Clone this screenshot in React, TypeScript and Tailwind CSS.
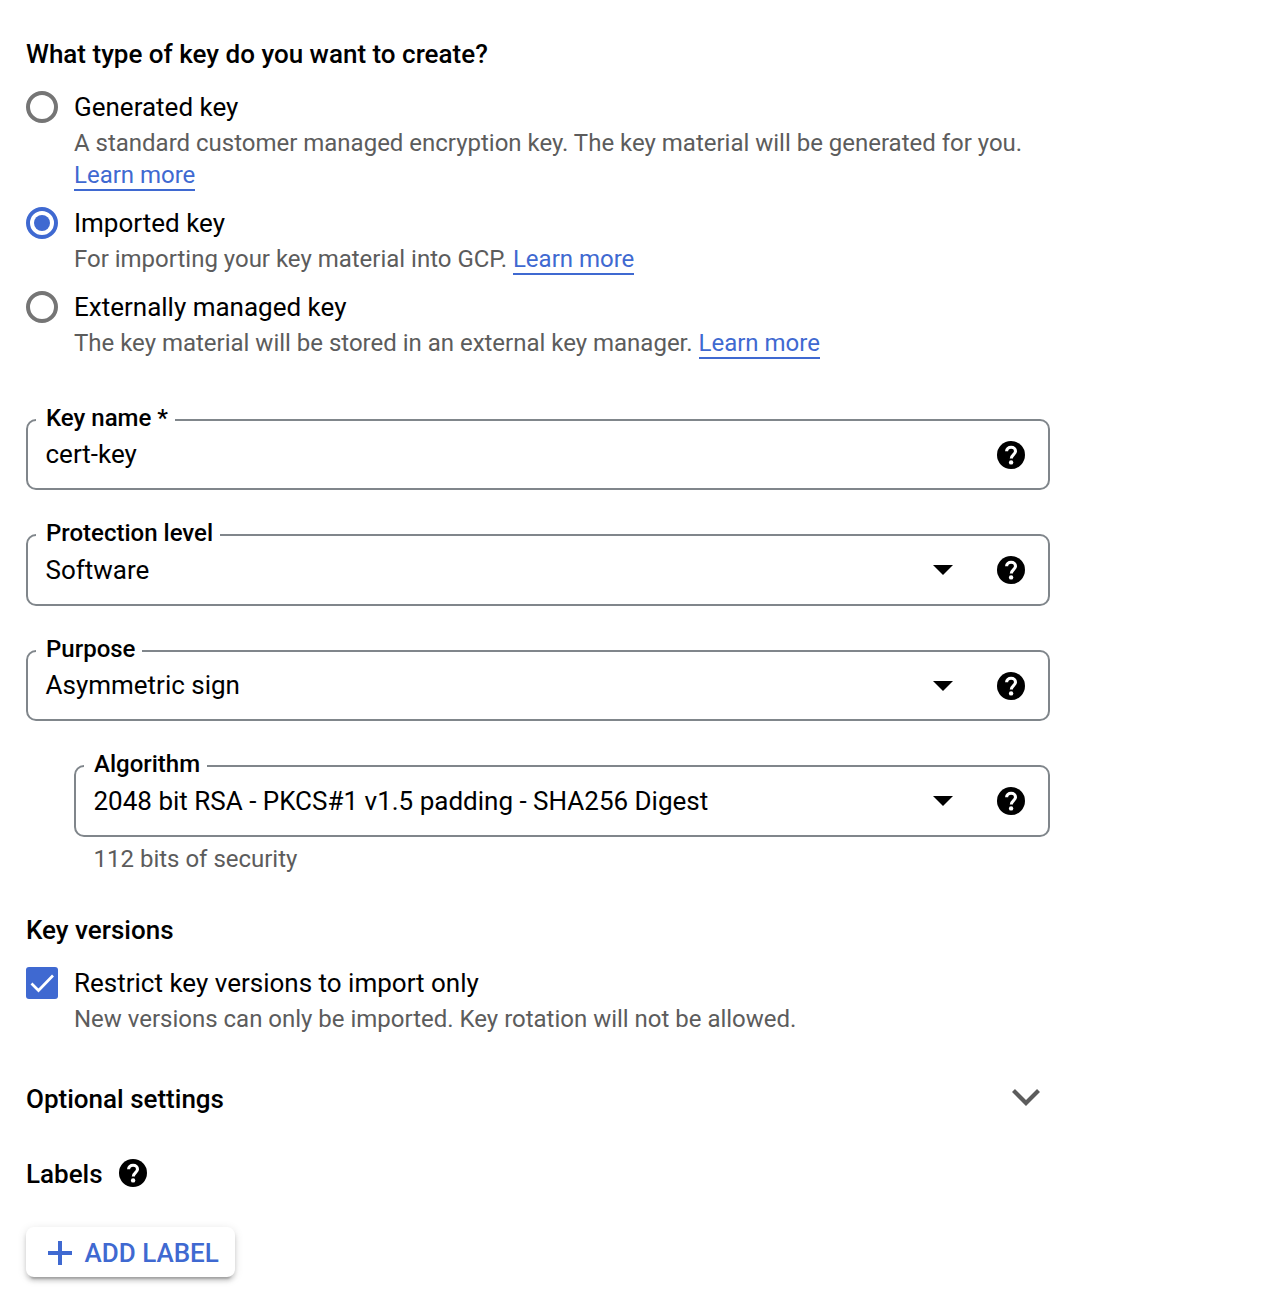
import type { ReactNode } from "react";

function HelpIcon() {
  return (
    <svg viewBox="0 0 28 28" className="block size-7 shrink-0" aria-hidden="true">
      <circle cx="14" cy="14" r="14" fill="#000" />
      <path
        d="M9.6 10.3C9.6 7.8 11.6 6.2 14.1 6.2s4.4 1.6 4.4 4c0 3.2-4.2 3.6-4.2 7.3"
        fill="none"
        stroke="#fff"
        strokeWidth="3.1"
      />
      <circle cx="14.1" cy="21.4" r="2.2" fill="#fff" />
    </svg>
  );
}

function LearnMore() {
  return (
    <a href="#" className="border-b-2 border-[#3f69d1] text-[#3f69d1]">
      Learn more
    </a>
  );
}

function Heading({ children }: { children: ReactNode }) {
  return <h2 className="text-[26px] leading-8 font-medium">{children}</h2>;
}

function Radio({ checked = false }: { checked?: boolean }) {
  return checked ? (
    <span className="flex size-8 shrink-0 items-center justify-center rounded-full border-4 border-[#3f69d1]">
      <span className="size-4 rounded-full bg-[#3f69d1]" />
    </span>
  ) : (
    <span className="size-8 shrink-0 rounded-full border-4 border-[#757575]" />
  );
}

function Option({ control, title, children }: { control: ReactNode; title: string; children: ReactNode }) {
  return (
    <div className="flex gap-4">
      {control}
      <div>
        <div className="text-[26px] leading-8">{title}</div>
        <div className="mt-1 text-[24px] leading-8 tracking-[-0.01px] text-[#5c5c5c]">{children}</div>
      </div>
    </div>
  );
}

function Field({ label, value, select = false }: { label: string; value: string; select?: boolean }) {
  return (
    <div className="relative flex h-[71.5px] items-center rounded-[10px] border-2 border-[#80868b] pr-[23px] pl-[17.5px]">
      <span className="absolute -top-[19px] left-2 bg-white pr-[7px] pl-[10px] text-[24px] leading-8 font-medium">
        {label}
      </span>
      <span className="flex-1 pb-[0.6px] text-[26px] leading-8">{value}</span>
      {select && (
        <svg viewBox="0 0 20 10" className="mr-[44px] h-[10px] w-5" aria-hidden="true">
          <path d="M0 0h20L10 10z" />
        </svg>
      )}
      <HelpIcon />
    </div>
  );
}

export default function App() {
  return (
    <main className="h-[1296px] w-full overflow-hidden bg-white pt-[38px] pl-[26px] font-[Roboto,sans-serif] text-black">
      <div className="w-[1024px]">
        <Heading>What type of key do you want to create?</Heading>

        <div className="mt-[21px] flex flex-col gap-4">
          <Option control={<Radio />} title="Generated key">
            A standard customer managed encryption key. The key material will be generated for you.
            <br />
            <LearnMore />
          </Option>
          <Option control={<Radio checked />} title="Imported key">
            For importing your key material into GCP. <LearnMore />
          </Option>
          <Option control={<Radio />} title="Externally managed key">
            The key material will be stored in an external key manager. <LearnMore />
          </Option>
        </div>

        <div className="mt-[59.9px] flex flex-col gap-11">
          <Field label="Key name *" value="cert-key" />
          <Field label="Protection level" value="Software" select />
          <Field label="Purpose" value="Asymmetric sign" select />
          <div className="pl-12">
            <Field label="Algorithm" value="2048 bit RSA - PKCS#1 v1.5 padding - SHA256 Digest" select />
            <div className="mt-[6px] pl-[19.6px] text-[24px] leading-8 tracking-[-0.01px] text-[#5c5c5c]">
              112 bits of security
            </div>
          </div>
        </div>

        <div className="mt-[39.1px]">
          <Heading>Key versions</Heading>
        </div>
        <div className="mt-[21px]">
          <Option
            control={
              <span className="flex size-8 shrink-0 items-center justify-center rounded-[3px] bg-[#3f69d1]">
                <svg viewBox="0 0 32 32" className="size-8" aria-hidden="true">
                  <path d="M5.5 16.5l7 7L27 8.5" fill="none" stroke="#fff" strokeWidth="2.7" />
                </svg>
              </span>
            }
            title="Restrict key versions to import only"
          >
            New versions can only be imported. Key rotation will not be allowed.
          </Option>
        </div>

        <div className="mt-12 flex items-center justify-between pr-[10px]">
          <Heading>Optional settings</Heading>
          <svg viewBox="0 0 28 17" className="mb-[3px] h-[17px] w-7" aria-hidden="true">
            <path d="M1.5 1.5L14 14L26.5 1.5" fill="none" stroke="#5c5c5c" strokeWidth="4.2" />
          </svg>
        </div>

        <div className="mt-[43px] flex items-center gap-4">
          <Heading>Labels</Heading>
          <div className="pb-[2px]">
            <HelpIcon />
          </div>
        </div>

        <button className="mt-[37px] flex h-[50px] w-[209px] items-center gap-[12.5px] rounded-lg bg-white pt-[2px] pl-[22px] text-[26px] leading-8 font-medium whitespace-nowrap text-[#3f69d1] shadow-[0_6px_2px_-4px_rgba(0,0,0,0.2),0_4px_4px_rgba(0,0,0,0.14),0_2px_10px_rgba(0,0,0,0.12)]">
          <svg viewBox="0 0 24 24" className="size-6 shrink-0" aria-hidden="true">
            <path d="M12 0v24M0 12h24" stroke="#3f69d1" strokeWidth="4" />
          </svg>
          ADD LABEL
        </button>
      </div>
    </main>
  );
}
